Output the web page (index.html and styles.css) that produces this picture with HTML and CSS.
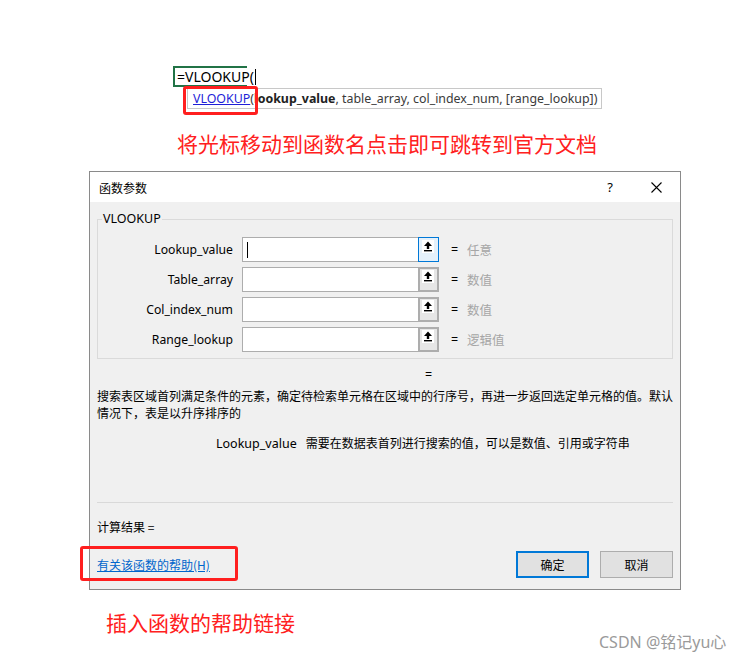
FILE: index.html
```html
<!DOCTYPE html>
<html lang="zh-CN">
<head>
<meta charset="utf-8">
<title>函数参数</title>
<link rel="stylesheet" href="styles.css">
</head>
<body>
<div class="page">
  <div class="cell">=VLOOKUP(<span class="caret"></span></div>
  <div class="tip"><a class="fn" href="#">VLOOKUP</a>(<b>lookup_value</b>, table_array, col_index_num, [range_lookup])</div>
  <p class="caption cap1">将光标移动到函数名点击即可跳转到官方文档</p>

  <div class="dialog">
    <div class="titlebar">
      <span class="title">函数参数</span>
      <span class="help">?</span>
      <svg class="close" width="11" height="11" viewBox="0 0 11 11"><path d="M0.5 0.5 L10.5 10.5 M10.5 0.5 L0.5 10.5" stroke="#000" stroke-width="1.1" fill="none"/></svg>
    </div>
    <div class="dlg-body">
      <fieldset class="group">
        <legend>VLOOKUP</legend>
        <div class="row">
          <span class="lbl">Lookup_value</span>
          <span class="field"><span class="icaret"></span></span>
          <span class="pick focus"><svg class="arrow" width="12" height="13" viewBox="0 0 12 13"><rect width="12" height="13" fill="#fff"/><path d="M6 1.5 L2 6 L4.8 6 L4.8 9 L7.2 9 L7.2 6 L10 6 Z" fill="#000"/><rect x="2" y="10" width="8" height="1.4" fill="#000"/></svg></span>
          <span class="eq">=</span><span class="val">任意</span>
        </div>
        <div class="row">
          <span class="lbl">Table_array</span>
          <span class="field"></span>
          <span class="pick"><svg class="arrow" width="12" height="13" viewBox="0 0 12 13"><rect width="12" height="13" fill="#fff"/><path d="M6 1.5 L2 6 L4.8 6 L4.8 9 L7.2 9 L7.2 6 L10 6 Z" fill="#000"/><rect x="2" y="10" width="8" height="1.4" fill="#000"/></svg></span>
          <span class="eq">=</span><span class="val">数值</span>
        </div>
        <div class="row">
          <span class="lbl">Col_index_num</span>
          <span class="field"></span>
          <span class="pick"><svg class="arrow" width="12" height="13" viewBox="0 0 12 13"><rect width="12" height="13" fill="#fff"/><path d="M6 1.5 L2 6 L4.8 6 L4.8 9 L7.2 9 L7.2 6 L10 6 Z" fill="#000"/><rect x="2" y="10" width="8" height="1.4" fill="#000"/></svg></span>
          <span class="eq">=</span><span class="val">数值</span>
        </div>
        <div class="row">
          <span class="lbl">Range_lookup</span>
          <span class="field"></span>
          <span class="pick"><svg class="arrow" width="12" height="13" viewBox="0 0 12 13"><rect width="12" height="13" fill="#fff"/><path d="M6 1.5 L2 6 L4.8 6 L4.8 9 L7.2 9 L7.2 6 L10 6 Z" fill="#000"/><rect x="2" y="10" width="8" height="1.4" fill="#000"/></svg></span>
          <span class="eq">=</span><span class="val">逻辑值</span>
        </div>
      </fieldset>
      <div class="result-eq">=</div>
      <p class="desc">搜索表区域首列满足条件的元素，确定待检索单元格在区域中的行序号，再进一步返回选定单元格的值。默认情况下，表是以升序排序的</p>
      <p class="argdesc"><span class="argname">Lookup_value</span>需要在数据表首列进行搜索的值，可以是数值、引用或字符串</p>
      <div class="sep"></div>
      <p class="calc">计算结果 =</p>
      <div class="footer">
        <a class="helplink" href="#">有关该函数的帮助(H)</a>
        <span class="btn primary">确定</span>
        <span class="btn">取消</span>
      </div>
    </div>
  </div>

  <p class="caption cap2">插入函数的帮助链接</p>
  <div class="watermark">CSDN @铭记yu心</div>

  <div class="mark mark-fn"></div>
  <div class="mark mark-help"></div>
</div>
</body>
</html>
```
FILE: styles.css
```css
html, body {
  margin: 0;
  padding: 0;
  background: #fff;
}
body {
  font-family: "Noto Sans", "Noto Sans CJK SC", sans-serif;
  color: #000;
}
.page {
  position: relative;
  width: 744px;
  height: 661px;
  padding-top: 66px;
  box-sizing: border-box;
  overflow: hidden;
}
p { margin: 0; }

/* spreadsheet cell + tooltip */
.cell {
  margin-left: 173px;
  width: 74px;
  height: 21px;
  box-sizing: border-box;
  border: 2px solid #217346;
  border-right: none;
  font-size: 14px;
  line-height: 17px;
  padding-left: 2px;
  white-space: nowrap;
  color: #000;
}
.caret {
  display: inline-block;
  width: 1px;
  height: 16px;
  background: #000;
  vertical-align: -3px;
  margin-left: 1px;
}
.tip {
  margin: 1px 0 0 187px;
  width: 415px;
  height: 21px;
  box-sizing: border-box;
  border: 1px solid #c8c8c8;
  background: #fff;
  padding-left: 5px;
  font-size: 12.4px;
  line-height: 19px;
  color: #3a3a3a;
  white-space: nowrap;
}
.tip .fn {
  color: #1f1fd8;
  text-decoration: underline;
}
.tip b { color: #222; }

.caption {
  font-family: "Noto Sans CJK SC", sans-serif;
  font-size: 21px;
  line-height: 28px;
  color: #ff2020;
}
.cap1 { margin: 20px 0 0 177px; }
.cap2 { margin: 18px 0 0 106px; }

/* dialog */
.dialog {
  margin: 14px 0 0 89px;
  width: 592px;
  height: 419px;
  box-sizing: border-box;
  border: 1px solid #8a8a8a;
  background: #f0f0f0;
  font-size: 12px;
}
.titlebar {
  height: 30px;
  background: #fff;
  display: flex;
  align-items: center;
  padding: 0 18px 0 9px;
}
.title {
  font-family: "Noto Sans CJK SC", sans-serif;
  font-size: 12px;
}
.help {
  margin-left: auto;
  font-size: 13px;
  margin-right: 38px;
}
.close { display: block; }

.dlg-body {
  padding: 9px 7px 0 7px;
}
.group {
  margin: 0;
  padding: 10px 0 6px 0;
  border: 1px solid #dadada;
  min-width: 0;
}
.group legend {
  margin-left: 4px;
  padding: 0 1px;
  font-size: 12.5px;
  line-height: 16px;
}
.row {
  display: flex;
  align-items: center;
  height: 25px;
  margin-bottom: 5px;
}
.row:last-child { margin-bottom: 0; }
.lbl {
  width: 135px;
  text-align: right;
  font-size: 12.2px;
}
.field {
  margin-left: 9px;
  width: 176px;
  height: 25px;
  box-sizing: border-box;
  border: 1px solid #adadad;
  border-right: none;
  background: #fff;
  display: flex;
  align-items: center;
  padding-left: 4px;
}
.icaret {
  width: 1px;
  height: 16px;
  background: #000;
}
.pick {
  width: 21px;
  height: 25px;
  box-sizing: border-box;
  border: 2px solid #adadad;
  background: #e6e6e6;
  padding: 1px 0 0 2px;
}
.pick.focus {
  border: 1px solid #0078d7;
  background: #e5f1fb;
  padding: 2px 0 0 3px;
}
.arrow { display: block; }
.eq {
  margin-left: 12px;
  width: 16px;
  font-size: 12.5px;
}
.val {
  font-family: "Noto Sans CJK SC", sans-serif;
  color: #a6a6a6;
  font-size: 12.5px;
}

.result-eq {
  margin-top: 7px;
  padding-left: 328px;
  line-height: 17px;
  font-size: 12.5px;
}
.desc {
  margin: 4px -8px 0 0;
  font-family: "Noto Sans CJK SC", sans-serif;
  font-size: 12px;
  line-height: 17px;
}
.argdesc {
  margin-top: 14px;
  padding-left: 119px;
  font-size: 12px;
  line-height: 17px;
}
.argname {
  font-size: 12.5px;
  margin-right: 9px;
}
.sep {
  margin-top: 50px;
  border-top: 1px solid #d9d9d9;
}
.calc {
  margin-top: 15px;
  line-height: 17px;
  font-family: "Noto Sans CJK SC", sans-serif;
}
.footer {
  margin-top: 16px;
  display: flex;
  align-items: center;
}
.helplink {
  color: #0066cc;
  text-decoration: underline;
  font-family: "Noto Sans CJK SC", sans-serif;
  font-size: 12px;
}
.btn {
  width: 73px;
  height: 27px;
  box-sizing: border-box;
  border: 1px solid #adadad;
  background: #e1e1e1;
  display: flex;
  align-items: center;
  justify-content: center;
  font-family: "Noto Sans CJK SC", sans-serif;
  margin-left: 11px;
}
.btn.primary {
  margin-left: auto;
  border: 2px solid #0078d7;
}

.watermark {
  position: absolute;
  left: 599px;
  top: 632px;
  font-family: "Noto Sans", "Noto Sans CJK SC", sans-serif;
  font-size: 16px;
  line-height: 20px;
  color: #9a9a9a;
}

/* red annotation boxes */
.mark {
  position: absolute;
  border: 3px solid #ff1f1f;
  border-radius: 3px;
  box-sizing: border-box;
}
.mark-fn { left: 183px; top: 86px; width: 75px; height: 29px; }
.mark-help { left: 80px; top: 546px; width: 158px; height: 35px; }
```
